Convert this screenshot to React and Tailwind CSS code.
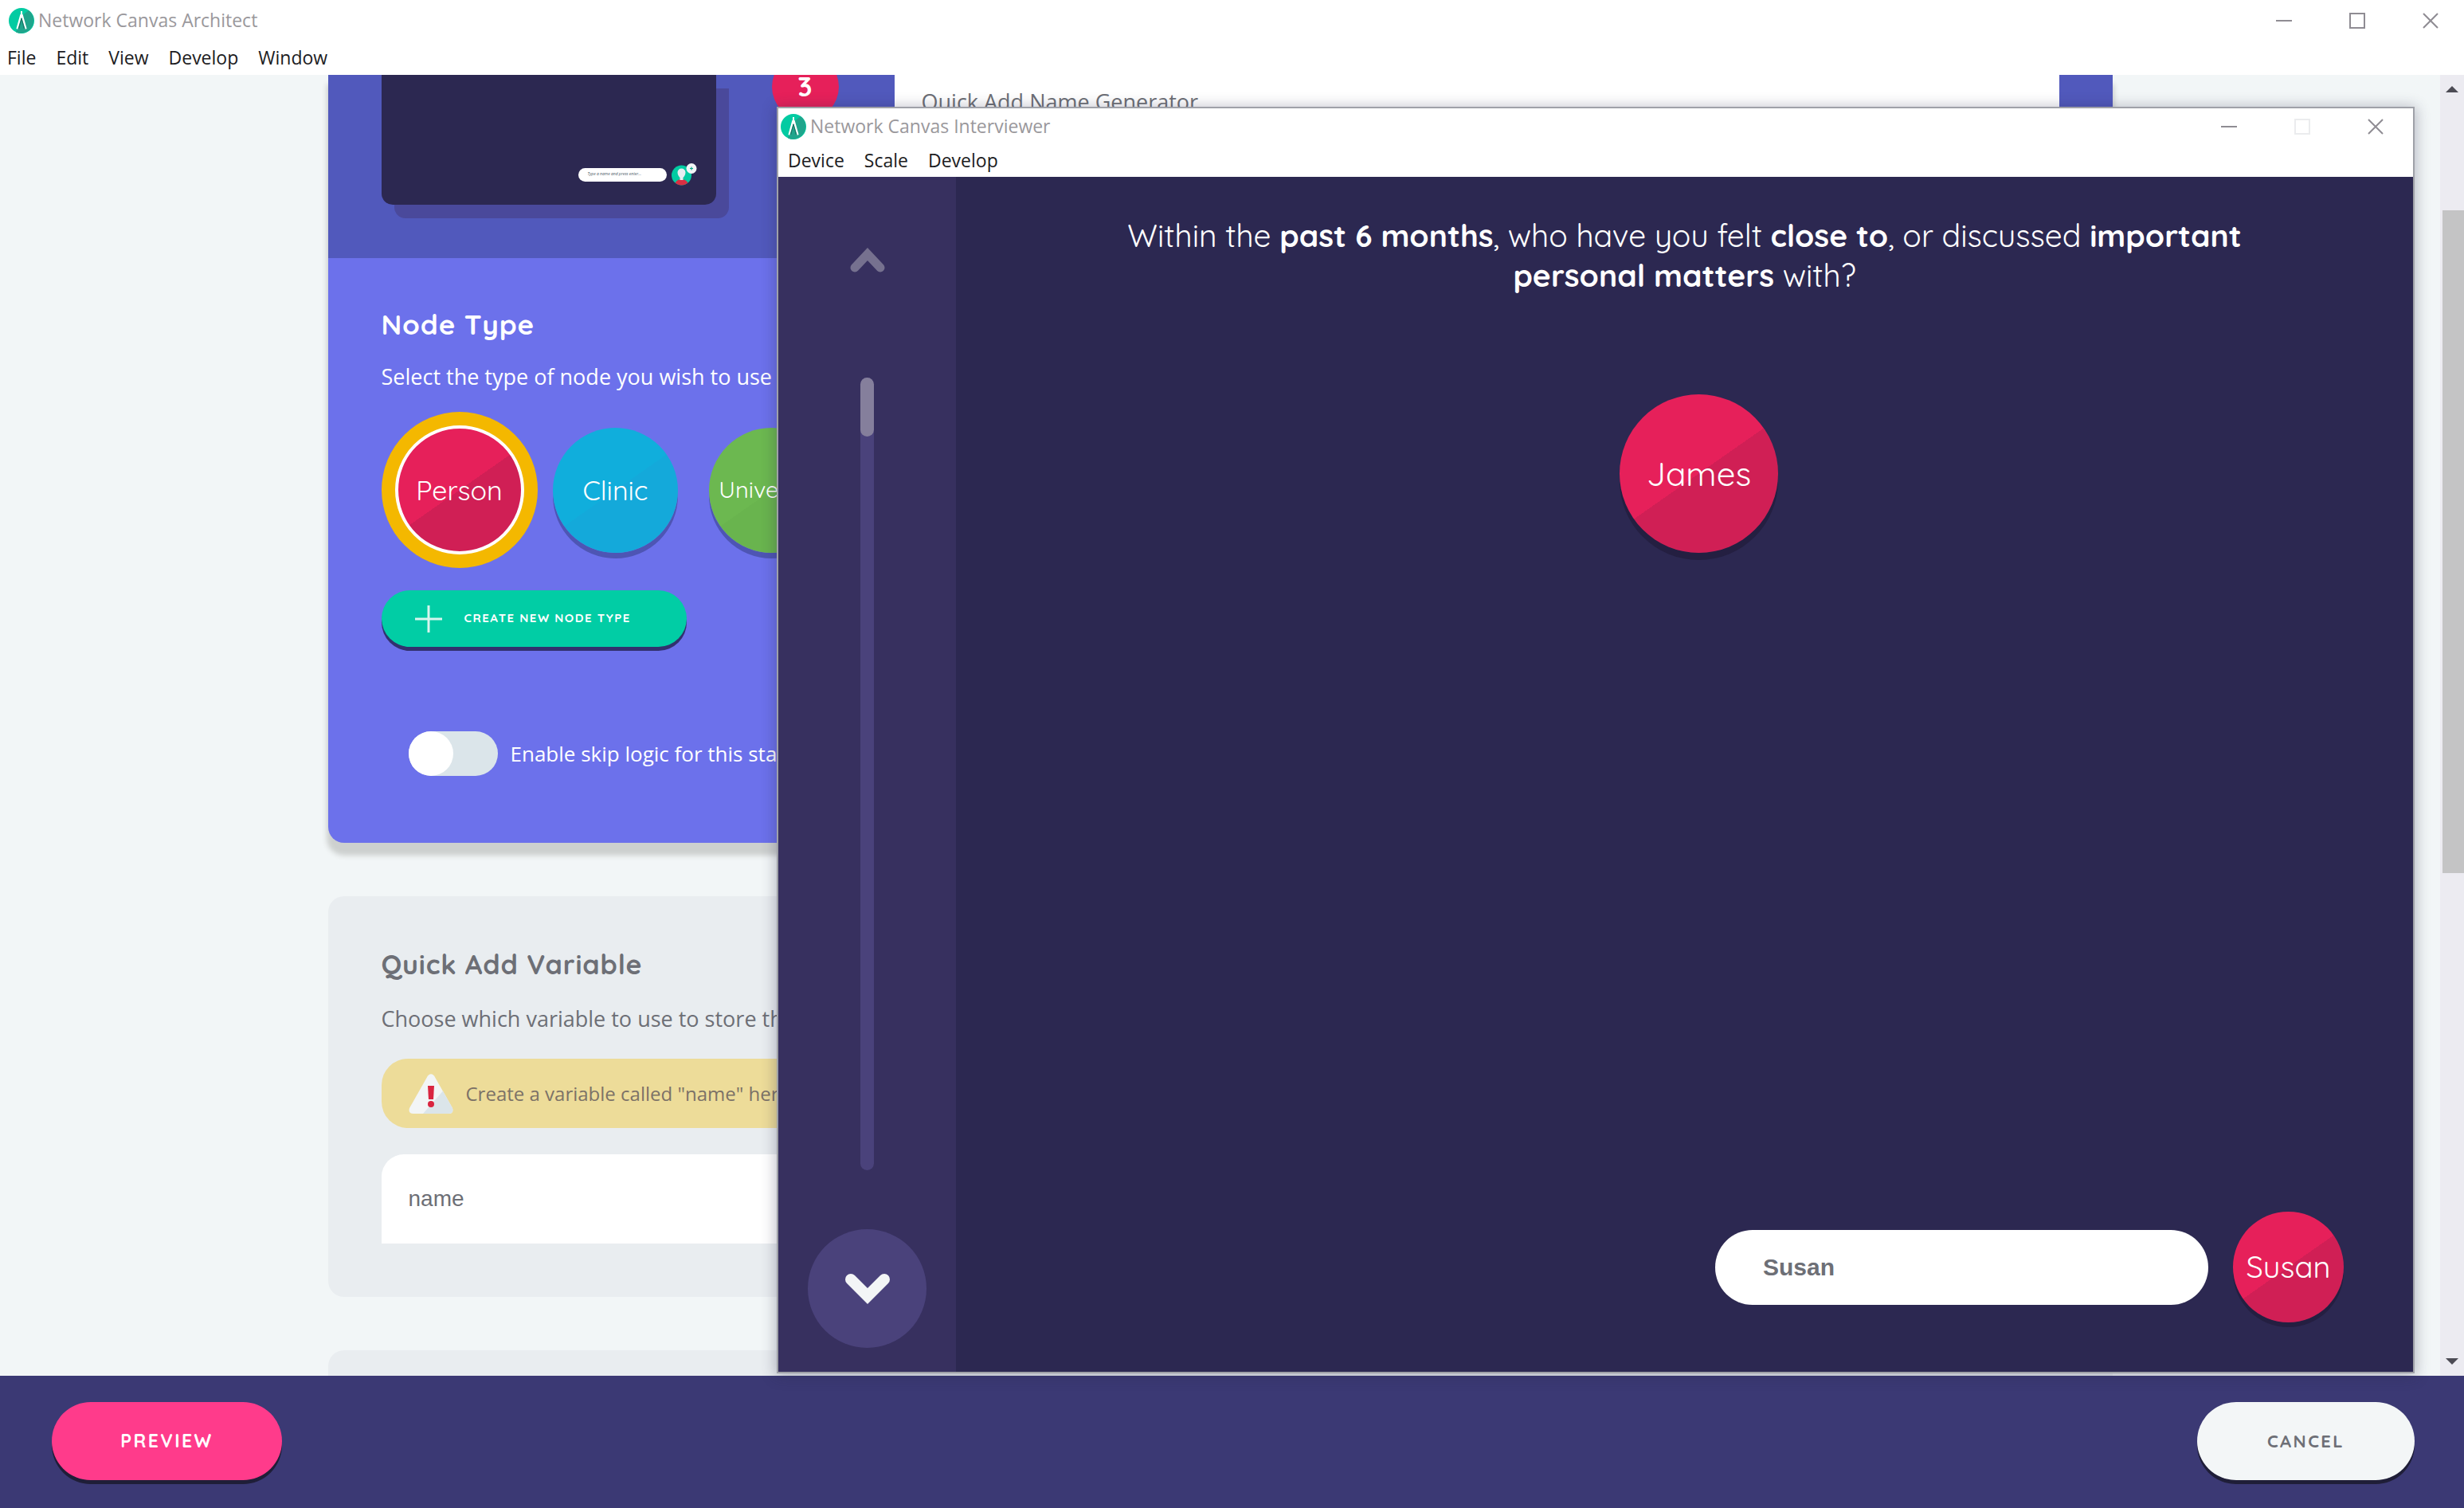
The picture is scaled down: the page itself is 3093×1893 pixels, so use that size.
import React from "react";

function Logo() {
  return (
    <svg viewBox="0 0 32 32" className="size-8 shrink-0" aria-hidden="true">
      <circle cx="16" cy="16" r="16" fill="#02cba2" />
      <path d="M25 3 A16 16 0 0 1 9 30.4 L16 10 Z" fill="#1fa58c" />
      <path d="M15 4h2v4h-2z" fill="#fff" />
      <path d="M14.4 8h3.2l5 18-1.8.8L16 11.5 11.2 26.8 9.4 26z" fill="#fff" />
      <path d="M16 13 L12.6 26 M16 13 L19.4 26" stroke="#1b6f62" strokeWidth="1" fill="none" />
    </svg>
  );
}

function WindowControls({ maxDisabled = false, className = "" }) {
  return (
    <div className={"flex items-center gap-[72px] text-[#8f8c93] " + className}>
      <button type="button" aria-label="Minimize" className="size-5">
        <svg viewBox="0 0 20 20" className="size-5"><path d="M0 10h20" stroke="currentColor" strokeWidth="2" /></svg>
      </button>
      <button type="button" aria-label="Maximize" disabled={maxDisabled} className={maxDisabled ? "size-5 text-[#ebecee]" : "size-5"}>
        <svg viewBox="0 0 20 20" className="size-5"><path d="M1 1h18v18H1z" stroke="currentColor" strokeWidth="2" fill="none" /></svg>
      </button>
      <button type="button" aria-label="Close" className="size-5">
        <svg viewBox="0 0 20 20" className="size-5"><path d="M1 1l18 18M19 1L1 19" stroke="currentColor" strokeWidth="2" /></svg>
      </button>
    </div>
  );
}

function MenuBar({ items, className }) {
  return (
    <nav className={"flex items-center gap-[25px] text-[23px] text-[#1c1c22] " + className}>
      {items.map((item) => (
        <button key={item} type="button">{item}</button>
      ))}
    </nav>
  );
}

function NodeOption({ name, label, look, checked, textSize }) {
  return (
    <label className={"relative flex size-[196px] items-center justify-center rounded-full " + (checked ? "bg-[#f4b800]" : "")}>
      <input type="radio" name={name} defaultChecked={checked} className="sr-only" />
      <span className={"flex shrink-0 items-center justify-center rounded-full font-['Quicksand','Lato',sans-serif] text-white " + look + " " + textSize}>
        {label}
      </span>
    </label>
  );
}

const RED = "bg-[linear-gradient(145deg,#e6205a_50%,#d01f55_50%)]";

function StageCard() {
  return (
    <section className="rounded-b-[20px] bg-[#6c71eb] text-white shadow-[0_14px_6px_2px_#cdd0cf]">
      <div className="flex items-start gap-[70px] bg-[#5159bc] px-[67px] pb-[67px]">
        <div className="flex h-[163px] w-[420px] shrink-0 items-end justify-end rounded-b-[14px] bg-[#2c2851] pr-6 pb-6 shadow-[16px_17px_0_#4a499b]">
          <div className="flex items-center gap-1.5">
            <div className="flex h-[17px] w-[111px] items-center rounded-full bg-white pl-3 font-['Open_Sans',sans-serif] text-[5px] italic text-[#4c5a66]">
              Type a name and press enter...
            </div>
            <svg viewBox="0 0 32 28" className="h-7 w-8" aria-hidden="true">
              <clipPath id="avatar"><circle cx="12.5" cy="15" r="12.5" /></clipPath>
              <g clipPath="url(#avatar)">
                <rect width="32" height="28" fill="#02cba2" />
                <ellipse cx="12.5" cy="26" rx="8" ry="6" fill="#d92f43" />
                <path d="M7.5 11.500a5 5 0 0 1 10 0c0 3-2 5.500-3 6.500v3h-4v-3c-1-1-3-3.500-3-6.500z" fill="#e6edf1" />
              </g>
              <circle cx="25" cy="6.500" r="6.500" fill="#f2f5f7" />
              <path d="M25 4.500v4M23 6.500h4" stroke="#02a886" strokeWidth="1.200" />
            </svg>
          </div>
        </div>
        <div className="-mt-[27px] flex size-[84px] shrink-0 items-center justify-center rounded-full bg-[#e6205a] font-['Quicksand','Lato',sans-serif] text-[34px] leading-7 font-bold">
          3
        </div>
        <input
          aria-label="Stage name"
          defaultValue="Quick Add Name Generator"
          className="h-[67px] min-w-0 flex-1 bg-white pl-[34px] text-[27px] text-[#6d6f76]"
        />
      </div>
      <div className="px-[67px] pt-[59px] pb-[84px]">
        <h2 className="font-['Quicksand','Lato',sans-serif] text-[35px] leading-[48px] font-bold tracking-wide">Node Type</h2>
        <p className="mt-[22px] text-[27px] leading-10">Select the type of node you wish to use with this stage.</p>
        <div className="mt-6 flex">
          <NodeOption name="node" label="Person" checked textSize="text-[34px]" look={"size-[162px] border-4 border-white " + RED} />
          <NodeOption name="node" label="Clinic" textSize="text-[34px]" look="size-[157px] bg-[linear-gradient(145deg,#10aedc_50%,#14a9da_50%)] shadow-[0_7px_0_#4e55b4]" />
          <NodeOption name="node" label="University" textSize="text-[29px]" look="size-[157px] bg-[linear-gradient(145deg,#6cb850_50%,#69b44e_50%)] shadow-[0_7px_0_#4e55b4]" />
        </div>
        <button type="button" className="mt-7 flex h-[71px] w-[383px] items-center rounded-full bg-[#01cda5] pl-[42px] shadow-[0_5px_0_#32316e]">
          <svg viewBox="0 0 34 34" className="size-[34px]" aria-hidden="true"><path d="M0 17h34M17 0v34" stroke="#d8f5ee" strokeWidth="3" /></svg>
          <span className="ml-[28px] font-['Quicksand','Lato',sans-serif] text-[15px] font-black tracking-widest">CREATE NEW NODE TYPE</span>
        </button>
        <label className="mt-[106px] ml-[34px] flex items-center gap-4 text-[26px]">
          <input type="checkbox" className="h-14 w-[112px] appearance-none rounded-full bg-[#dbe5ea] before:block before:size-14 before:rounded-full before:bg-white before:content-['']" />
          Enable skip logic for this stage
        </label>
      </div>
    </section>
  );
}

function VariableCard() {
  return (
    <section className="rounded-[20px] bg-[#e9edf0] px-[67px] pt-[62px] pb-[67px] text-[#6d6f76]">
      <h2 className="font-['Quicksand','Lato',sans-serif] text-[34px] leading-[48px] font-bold tracking-wide">Quick Add Variable</h2>
      <p className="mt-6 text-[27px] leading-10">Choose which variable to use to store the quick add value.</p>
      <div className="mt-[30px] flex h-[87px] items-center gap-4 rounded-[33px] bg-[#eddc99] pl-[34px] text-[24px] text-[#7c7267]">
        <svg viewBox="0 0 56 50" className="h-[50px] w-14" aria-hidden="true">
          <path d="M24 2.500Q28-2 32 2.500L55 43Q57 50 50 50H6Q-1 50 1 43Z" fill="#f2f5f6" />
          <path d="M43 21.500L55 43Q57 50 50 50H18Z" fill="#dbe5ea" />
          <path d="M24 15h8l-1 17h-6z" fill="#d92540" />
          <circle cx="28" cy="38" r="4" fill="#d92540" />
        </svg>
        <p>Create a variable called "name" here, and use it for this stage.</p>
      </div>
      <input
        aria-label="Variable"
        defaultValue="name"
        className="mt-[33px] block h-[112px] w-full rounded-t-[28px] bg-white px-[34px] font-['Liberation_Sans',Arial,sans-serif] text-[28px] text-[#6d6f76]"
      />
    </section>
  );
}

function PageScrollbar() {
  return (
    <div className="flex w-[30px] shrink-0 flex-col items-stretch bg-[#ecebf1]">
      <button type="button" aria-label="Scroll up" className="flex h-9 items-center justify-center">
        <svg viewBox="0 0 16 8" className="h-2 w-4"><path d="M0 8L8 0l8 8z" fill="#4c4b54" /></svg>
      </button>
      <div className="flex min-h-0 flex-1 flex-col pt-[134px]">
        <div className="ml-[3px] h-7/12 bg-[#c4c4c5]" />
      </div>
      <button type="button" aria-label="Scroll down" className="flex h-9 items-center justify-center">
        <svg viewBox="0 0 16 8" className="h-2 w-4"><path d="M0 0l8 8 8-8z" fill="#4c4b54" /></svg>
      </button>
    </div>
  );
}

function Interviewer() {
  return (
    <div className="absolute top-[136px] right-16 bottom-[171px] left-[977px] flex flex-col bg-white shadow-[0_0_0_2px_#9fa1a8,0_2px_16px_4px_rgba(40,40,70,0.3)]">
      <header className="flex h-[45px] shrink-0 items-center pl-[3px]">
        <Logo />
        <h1 className="ml-[5px] text-[23px] text-[#9a989c]">Network Canvas Interviewer</h1>
        <WindowControls maxDisabled className="ml-auto pr-[37px]" />
      </header>
      <MenuBar items={["Device", "Scale", "Develop"]} className="h-[41px] shrink-0 pl-3" />
      <div className="flex min-h-0 flex-1 font-['Quicksand','Lato',sans-serif] text-white">
        <aside className="flex w-[223px] shrink-0 flex-col items-center bg-[#37305f] pt-[89px] pb-[30px]">
          <button type="button" aria-label="Previous">
            <svg viewBox="0 0 44 31" className="h-[31px] w-11"><path d="M6 25L22 8l16 17" fill="none" stroke="#76718f" strokeWidth="11" strokeLinecap="round" strokeLinejoin="miter" /></svg>
          </button>
          <div role="progressbar" aria-label="Progress" aria-valuenow={7} className="mt-[132px] w-[17px] flex-1 rounded-full bg-[#4a427b]">
            <div className="h-[74px] rounded-full bg-[#857f9c]" />
          </div>
          <button type="button" aria-label="Next" className="mt-[74px] flex size-[149px] items-center justify-center rounded-full bg-[#4a427b]">
            <svg viewBox="0 0 56 38" className="h-[38px] w-14"><path d="M7 7l21 21L49 7" fill="none" stroke="#f3f5f6" strokeWidth="14" strokeLinecap="round" strokeLinejoin="miter" /></svg>
          </button>
        </aside>
        <main className="flex flex-1 flex-col items-center bg-[#2c2851] pt-[49px]">
          <p className="max-w-[1480px] text-center text-[39px] leading-[50px]">
            Within the <strong>past 6 months</strong>, who have you felt <strong>close to</strong>, or discussed <strong>important personal matters</strong> with?
          </p>
          <div className={"mt-[124px] ml-9 flex size-[199px] items-center justify-center rounded-full text-[42px] shadow-[0_9px_0_#241f41] " + RED}>
            James
          </div>
          <form className="mt-auto mr-[87px] mb-[62px] flex items-center gap-[31px] self-end" onSubmit={(e) => e.preventDefault()}>
            <input
              aria-label="Name"
              defaultValue="Susan"
              className="h-[94px] w-[619px] rounded-full bg-white px-[60px] font-['Liberation_Sans',Arial,sans-serif] text-[30px] font-bold text-[#6d6f76]"
            />
            <button type="submit" className={"size-[139px] rounded-full text-[38px] shadow-[0_6px_0_#241f41] " + RED}>Susan</button>
          </form>
        </main>
      </div>
    </div>
  );
}

export default function App() {
  return (
    <div className="relative flex h-screen flex-col overflow-hidden bg-white font-['Segoe_UI','Open_Sans',sans-serif]">
      <header className="flex h-[51px] shrink-0 items-center pl-[11px]">
        <Logo />
        <h1 className="ml-[5px] text-[23px] text-[#9a989c]">Network Canvas Architect</h1>
        <WindowControls className="ml-auto pr-8" />
      </header>
      <MenuBar items={["File", "Edit", "View", "Develop", "Window"]} className="h-[43px] shrink-0 pl-[9px]" />
      <div className="flex min-h-0 flex-1">
        <div className="min-w-0 flex-1 overflow-hidden bg-[#f2f6f7]">
          <div className="mx-auto flex max-w-[2240px] flex-col gap-[67px]">
            <StageCard />
            <VariableCard />
            <section className="h-40 rounded-[20px] bg-[#e9edf0]" />
          </div>
        </div>
        <PageScrollbar />
      </div>
      <Interviewer />
      <footer className="flex h-[166px] shrink-0 items-start justify-between bg-[#3b3974] pt-[33px] pr-[62px] pl-[65px] font-['Quicksand','Lato',sans-serif] tracking-[0.15em]">
        <button type="button" className="h-[98px] w-[289px] rounded-full bg-[#ff3b8b] text-[23px] font-black text-white shadow-[0_5px_0_#1f1e38]">PREVIEW</button>
        <button type="button" className="h-[98px] w-[273px] rounded-full bg-[#f3f6f7] text-[22px] font-bold text-[#6d6f76] shadow-[0_5px_0_#1f1e38]">CANCEL</button>
      </footer>
    </div>
  );
}
